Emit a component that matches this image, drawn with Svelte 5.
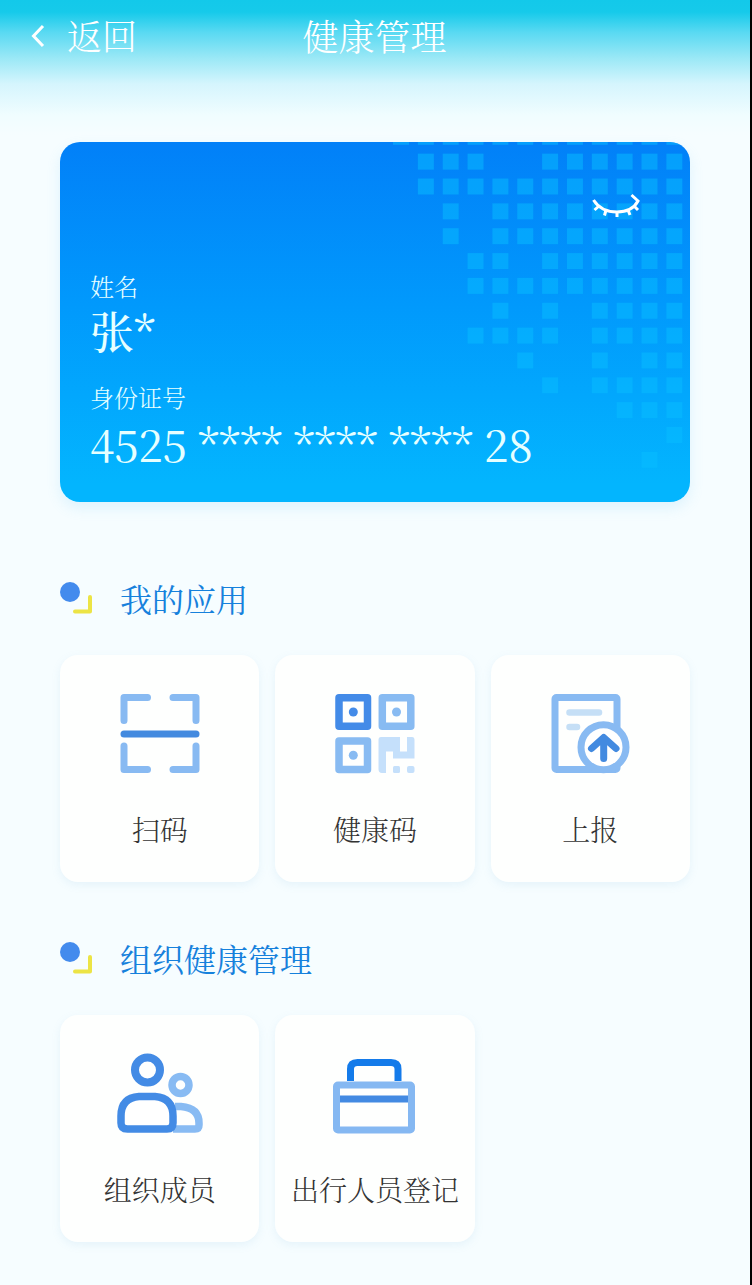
<script lang="ts">
    // one string per row of the card's dot map, "#" is a lit square
    const dots = [
        "############",
        ".###..######",
        ".###########",
        "..#.########",
        "..#.########",
        "...##.######",
        "...#########",
        "....#.#.####",
        "...####.####",
        ".....#..#.##",
        "......#.####",
        ".........###",
        "...........#",
        "..........#.",
    ];

    const squares = dots.flatMap((row, y) =>
        [...row].map((c, x) => ({ x, y, on: c === "#" })).filter((s) => s.on)
    );

    const sections = [
        {
            title: "我的应用",
            items: [
                { icon: "scan", label: "扫码" },
                { icon: "qr", label: "健康码" },
                { icon: "report", label: "上报" },
            ],
        },
        {
            title: "组织健康管理",
            items: [
                { icon: "members", label: "组织成员" },
                { icon: "travel", label: "出行人员登记" },
            ],
        },
    ];
</script>

<div class="page">
    <header>
        <div class="back">
            <svg width="16" height="24" viewBox="0 0 16 24" fill="none" stroke="#fff" stroke-width="3">
                <path d="M13 2 L3.500 12 L13 22" />
            </svg>
            <span>返回</span>
        </div>
        <h1>健康管理</h1>
    </header>

    <section class="card">
        <svg class="map" width="300" height="360" viewBox="0 0 300 360">
            {#each squares as s}
                <rect x={3 + s.x * 24.85} y={-13.2 + s.y * 24.85} width="16" height="16" />
            {/each}
        </svg>
        <svg class="eye" width="50" height="26" viewBox="0 0 50 26" fill="none" stroke="#fff" stroke-width="3">
            <path d="M1.500 8 Q9 20 25 20 Q40 20 46 9 L39.500 3" />
            <path d="M7 14 L2.500 18 M14 18 L12.500 23.500 M25 20 V25 M36 18 L38 23 M42 14 L46 18" />
        </svg>
        <div class="label">姓名</div>
        <div class="value name">张*</div>
        <div class="label id-label">身份证号</div>
        <div class="value">4525 **** **** **** 28</div>
    </section>

    {#each sections as section}
        <section class="group">
            <div class="heading">
                <svg width="34" height="34" viewBox="0 0 34 34">
                    <circle cx="10" cy="11" r="10" fill="#438bed" />
                    <path d="M15 30.500 H30 V16" fill="none" stroke="#ece445" stroke-width="4" stroke-linecap="round" stroke-linejoin="round" />
                </svg>
                <h2>{section.title}</h2>
            </div>
            <div class="grid">
                {#each section.items as item}
                    <div class="tile">
                        <svg width="90" height="84" viewBox="0 0 90 84" fill="none">
                            {#if item.icon === "scan"}
                                <g stroke="#88baf2" stroke-width="7" stroke-linecap="round" stroke-linejoin="round">
                                    <path d="M32.500 5.500 H9 V28.500 M58 5.500 H81 V28.500 M9 54 V77.500 H32.500 M81 54 V77.500 H58" />
                                    <path d="M9 42 H81" stroke="#438adf" />
                                </g>
                            {:else if item.icon === "qr"}
                                <g stroke-width="7.500" stroke-linejoin="round">
                                    <rect x="9" y="5.700" width="28.500" height="28.500" stroke="#438be8" />
                                    <rect x="52.300" y="5.700" width="28.500" height="28.500" stroke="#88bbf2" />
                                    <rect x="9" y="49" width="28.500" height="28.500" stroke="#88bbf2" />
                                </g>
                                <circle cx="23.300" cy="20" r="4.500" fill="#438be8" />
                                <circle cx="66.500" cy="20" r="4.500" fill="#88bbf2" />
                                <circle cx="23.300" cy="63.300" r="4.500" fill="#88bbf2" />
                                <path d="M51 45 H70 V59.500 H77 V45 H82 Q84.500 45 84.500 48 V66.500 H63 V59.500 H56 V81 H52 Q48.500 81 48.500 77 V48 Q48.500 45 51 45 Z" fill="#c5e0fb" />
                                <rect x="63" y="74" width="7" height="7" rx="1.500" fill="#c5e0fb" />
                                <rect x="77" y="74" width="7.500" height="7" rx="2" fill="#c5e0fb" />
                            {:else if item.icon === "report"}
                                <rect x="10" y="5.500" width="62" height="72" rx="1.500" stroke="#88baf2" stroke-width="7" />
                                <path d="M24.500 20.500 H54" stroke="#c5dff6" stroke-width="6.500" stroke-linecap="round" />
                                <path d="M24.500 35 H32" stroke="#c5dff6" stroke-width="6.500" stroke-linecap="round" />
                                <circle cx="58.500" cy="55.200" r="22.500" fill="#fff" stroke="#88baf2" stroke-width="7" />
                                <path d="M58.700 66.500 V46 M46.500 56.500 L58.700 45.500 L71 56.500" stroke="#438ae0" stroke-width="7" stroke-linecap="round" stroke-linejoin="round" />
                            {:else if item.icon === "members"}
                                <circle cx="65.500" cy="33" r="8.500" stroke="#88bbf3" stroke-width="7.500" />
                                <path d="M60 54.500 H66 Q84 56 84 71 V73 Q84 77 80 77 H58" stroke="#88bbf3" stroke-width="7.500" />
                                <circle cx="32.500" cy="18" r="12.500" stroke="#438be5" stroke-width="8" />
                                <path d="M24 44.500 H40 Q58 46 58 64 V71 Q58 77 52 77 H12.500 Q6 77 6 71 V64 Q6 46 24 44.500 Z" fill="#fff" stroke="#438be5" stroke-width="7.500" />
                            {:else}
                                <path d="M20.500 29 V17 Q20.500 10.500 27.500 10.500 H61 Q68 10.500 68 17 V29" stroke="#147bea" stroke-width="7" />
                                <rect x="6.500" y="33" width="75" height="45" rx="1.500" stroke="#85b8f2" stroke-width="7" />
                                <path d="M10 47 H78" stroke="#438ae2" stroke-width="7" />
                            {/if}
                        </svg>
                        <p>{item.label}</p>
                    </div>
                {/each}
            </div>
        </section>
    {/each}
</div>

<style>
    :global(body) {
        background: #f5fdff;
    }

    .page {
        box-sizing: border-box;
        height: 1285px;
        padding: 0 60px;
        border-right: 2px solid #000;
        background: linear-gradient(#13c9ea 0, #16caea 12px, #58d9f2 32px, #9ae8f6 58px, #d5f5fd 84px, #f0fdff 115px, #f6fdff 135px);
        font-family: "Noto Serif CJK SC", "Source Han Serif SC", "Liberation Serif", "Noto Sans CJK SC", serif;
        font-weight: 300;
        overflow: hidden;
    }

    header {
        display: grid;
        grid-template-columns: 1fr auto 1fr;
        align-items: center;
        height: 71px;
        margin: 0 -29px 71px -30px;
        color: #fff;
    }

    .back {
        display: flex;
        align-items: center;
        gap: 21px;
        font-size: 35px;
        line-height: 71px;
    }

    h1 {
        margin: 0;
        font-size: 36px;
        font-weight: 300;
        line-height: 71px;
    }

    .card {
        position: relative;
        box-sizing: border-box;
        height: 360px;
        padding: 128px 30px 0;
        border-radius: 20px;
        background: linear-gradient(#0280f8, #0199fc 45%, #03b5fe 95%);
        box-shadow: 0 6px 14px rgba(100, 190, 245, 0.16);
        color: #e6ffff;
        overflow: hidden;
    }

    .map {
        position: absolute;
        top: 0;
        right: 0;
        fill: #08bdff;
        fill-opacity: 0.5;
    }

    .eye {
        position: absolute;
        top: 50px;
        right: 48px;
    }

    .label {
        font-size: 24px;
        line-height: 32px;
    }

    .value {
        font-size: 44px;
        font-weight: 400;
        line-height: 60px;
        white-space: pre;
    }

    .name {
        font-weight: 500;
        line-height: 56px;
    }

    .id-label {
        margin-top: 23px;
    }

    .group {
        height: 360px;
    }

    .card + .group {
        margin-top: 66px;
    }

    .heading {
        display: flex;
        align-items: center;
        gap: 26px;
        height: 60px;
        margin-bottom: 27px;
    }

    h2 {
        margin: 0;
        font-size: 32px;
        font-weight: 400;
        line-height: 60px;
        color: #1681dc;
    }

    .grid {
        display: grid;
        grid-template-columns: repeat(3, 1fr);
        gap: 16px;
    }

    .tile {
        display: flex;
        flex-direction: column;
        align-items: center;
        box-sizing: border-box;
        height: 227px;
        padding-top: 37px;
        border-radius: 18px;
        background: #fefffe;
        box-shadow: 0 3px 9px rgba(120, 180, 220, 0.13);
    }

    .tile p {
        margin: 33px 0 0;
        font-size: 28px;
        line-height: 40px;
        color: #333;
        white-space: nowrap;
    }
</style>
